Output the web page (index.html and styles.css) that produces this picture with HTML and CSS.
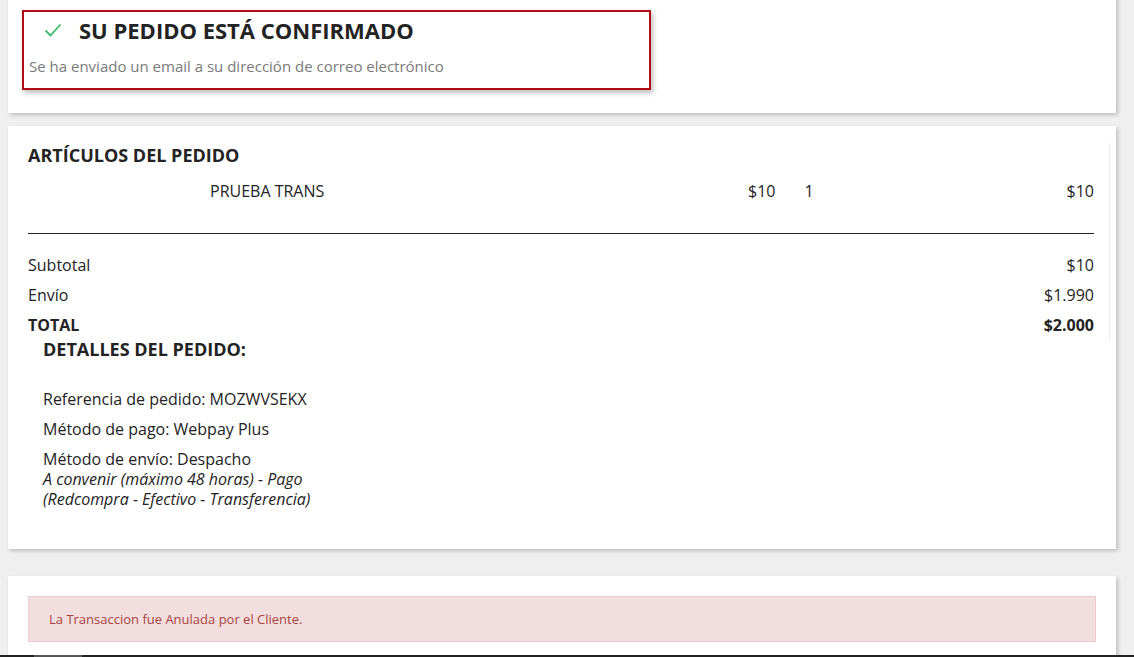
FILE: index.html
```html
<!DOCTYPE html>
<html lang="es">
<head>
  <meta charset="UTF-8">
  <meta name="viewport" content="width=device-width, initial-scale=1.0">
  <title>Pedido confirmado</title>
  <link rel="stylesheet" href="styles.css">
</head>
<body>

  <div class="page">
    <section class="card card-top">
      <div class="confirm">
        <h3 class="confirm-title">
          <svg class="check" width="18" height="14" viewBox="0 0 18 14"><path d="M1.5 7.5 L6.5 12.5 L16.5 1.5" fill="none" stroke="#3cba6b" stroke-width="1.8"/></svg>
          SU PEDIDO ESTÁ CONFIRMADO
        </h3>
        <p class="confirm-text">Se ha enviado un email a su dirección de correo electrónico</p>
      </div>
    </section>

    <section class="card card-order">
      <div class="order-items">
        <h3 class="section-title">ARTÍCULOS DEL PEDIDO</h3>
        <div class="item-row">
          <span class="item-name">PRUEBA TRANS</span>
          <span class="item-price">$10</span>
          <span class="item-qty">1</span>
          <span class="item-total">$10</span>
        </div>
        <hr class="divider">
        <table class="totals">
          <tr><td>Subtotal</td><td class="num">$10</td></tr>
          <tr><td>Envío</td><td class="num">$1.990</td></tr>
          <tr class="total"><td>TOTAL</td><td class="num">$2.000</td></tr>
        </table>
      </div>

      <div class="order-details">
        <h3 class="section-title">DETALLES DEL PEDIDO:</h3>
        <ul class="details">
          <li>Referencia de pedido: MOZWVSEKX</li>
          <li>Método de pago: Webpay Plus</li>
          <li>Método de envío: Despacho
            <em>A convenir (máximo 48 horas) - Pago<br>(Redcompra - Efectivo - Transferencia)</em>
          </li>
        </ul>
      </div>
    </section>

    <section class="card card-alert">
      <div class="alert">La Transaccion fue Anulada por el Cliente.</div>
    </section>
  </div>

  <div class="bottom-bar"><span class="bar-tab"></span></div>

</body>
</html>
```

FILE: styles.css
```css
body {
  font-family: 'Open Sans', 'Noto Sans', sans-serif;
  background: #efefef;
  margin: 0;
  color: #232323;
  overflow: hidden;
  height: 657px;
}

.page {
  width: 1108px;
  margin-left: 8px;
  margin-top: -21px;
}

.card {
  background: #fff;
  box-shadow: 2px 2px 4px rgba(0, 0, 0, 0.2);
}

.card-top {
  padding: 31px 465px 23px 14px;
  margin-bottom: 13px;
}

.confirm {
  border: 2px solid #b10d12;
  box-shadow: 2px 3px 5px rgba(0, 0, 0, 0.25);
  padding: 3px 0 11px 5px;
  height: 62px;
}

.confirm-title {
  margin: 0;
  font-size: 22px;
  font-weight: 700;
  line-height: 30px;
  display: flex;
  align-items: center;
}

.check {
  margin: 0 17px 0 15px;
}

.confirm-text {
  margin: 11px 0 0;
  font-size: 15px;
  color: #7a7a7a;
  line-height: 20px;
}

.card-order {
  padding: 17px 21px 40px 20px;
  margin-bottom: 27px;
}

.order-items {
  border-right: 1px solid #eee;
  padding-right: 15px;
  margin-right: -15px;
}

.section-title {
  margin: 0;
  font-size: 18px;
  font-weight: 700;
  line-height: 24px;
}

.item-row {
  display: flex;
  font-size: 16px;
  line-height: 22px;
  margin-top: 13px;
}

.item-name {
  margin-left: 182px;
  width: 538px;
}

.item-qty {
  margin-left: 29px;
}

.item-total {
  margin-left: auto;
}

.divider {
  border: 0;
  border-top: 1px solid #232323;
  margin: 31px 0 0;
}

.totals {
  width: 100%;
  border-collapse: collapse;
  margin-top: 16px;
  font-size: 16px;
}

.totals td {
  padding: 0;
  height: 30px;
}

.totals .num {
  text-align: right;
}

.totals .total {
  font-weight: 700;
}

.order-details {
  padding-left: 15px;
  margin-top: -3px;
}

.details {
  list-style: none;
  padding: 0;
  margin: 28px 0 0;
  font-size: 16px;
  line-height: 20px;
}

.details li {
  margin-bottom: 10px;
}

.details li:last-child {
  margin-bottom: 0;
}

.details em {
  display: block;
}

.card-alert {
  padding: 20px 20px 30px 20px;
}

.alert {
  background: #f2dede;
  border: 1px solid #ebccd1;
  color: #a94442;
  font-size: 13px;
  padding: 12px 20px;
  line-height: 20px;
}

.bottom-bar {
  position: fixed;
  left: 0;
  right: 0;
  bottom: 0;
  height: 2px;
  background: #222;
}

.bar-tab {
  display: block;
  margin-left: 34px;
  width: 48px;
  height: 2px;
  background: #555;
}
```
